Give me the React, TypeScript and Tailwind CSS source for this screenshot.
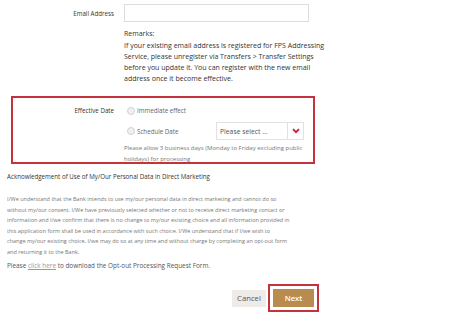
import React from 'react';

const Radio = () => (
    <span className="inline-block w-[8px] h-[8px] rounded-full border border-[#d2d2d2] bg-[#f0f0f0]" />
);

const App = () => {
    return (
        <div className="w-[474px] h-[314px] bg-white overflow-hidden font-['Open_Sans',sans-serif] text-[7px] leading-[11px] text-[#444] whitespace-nowrap">
            {/* Email */}
            <div className="flex items-center pt-[4px]">
                <div className="w-[114px] text-right text-[#333] text-[6.2px]">Email Address</div>
                <div className="ml-[10px] w-[185px] h-[18px] border border-[#ddd] bg-white" />
            </div>

            {/* Remarks */}
            <div className="ml-[124px] mt-[6px] text-[#333]">
                <div>Remarks:</div>
                <div className="mt-[1px]">
                    If your existing email address is registered for FPS Addressing<br />
                    Service, please unregister via Transfers &gt; Transfer Settings<br />
                    before you update it. You can register with the new email<br />
                    address once it become effective.
                </div>
            </div>

            {/* Effective date box */}
            <div className="ml-[11px] mt-[12px] w-[304px] h-[68px] border-2 border-[#c4323c] pt-[7px] text-[6.2px]">
                <div className="flex items-center h-[11px]">
                    <div className="w-[101px] text-right text-[#333]">Effective Date</div>
                    <div className="ml-[13px] flex items-center gap-[2px] text-[#666]">
                        <Radio />
                        <span>Immediate effect</span>
                    </div>
                </div>
                <div className="flex items-center mt-[6px] h-[18px]">
                    <div className="w-[114px]" />
                    <div className="w-[89px] flex items-center gap-[2px] text-[#666]">
                        <Radio />
                        <span>Schedule Date</span>
                    </div>
                    <div className="flex h-[18px] w-[88px] border border-[#e2e2e2]">
                        <div className="flex-1 flex items-center pl-[3px] text-[#555] text-[6.8px]">Please select ...</div>
                        <div className="w-[16px] border-l border-[#e2e2e2] flex items-center justify-center">
                            <svg width="8" height="6" viewBox="0 0 8 6">
                                <path d="M1 1.2 L4 4.2 L7 1.2" fill="none" stroke="#c4202e" strokeWidth="1.8" />
                            </svg>
                        </div>
                    </div>
                </div>
                <div className="ml-[111px] mt-[3px] text-[#777] text-[6px]">
                    Please allow 3 business days (Monday to Friday excluding public<br />
                    holidays) for processing
                </div>
            </div>

            {/* Acknowledgement */}
            <div className="ml-[7px] mt-[7px] text-[#333] text-[6.2px]">
                Acknowledgement of Use of My/Our Personal Data in Direct Marketing
            </div>
            <div className="ml-[7px] mt-[12px] text-[#777] text-[5.5px] leading-[10.5px]">
                I/We understand that the Bank intends to use my/our personal data in direct marketing and cannot do so<br />
                without my/our consent. I/We have previously selected whether or not to receive direct marketing contact or<br />
                information and I/we confirm that there is no change to my/our existing choice and all information provided in<br />
                this application form shall be used in accordance with such choice. I/We understand that if I/we wish to<br />
                change my/our existing choice, I/we may do so at any time and without charge by completing an opt-out form<br />
                and returning it to the Bank.
            </div>
            <div className="ml-[7px] mt-[3px] text-[#555] text-[6.4px]">
                Please <a className="underline text-[#999]">click here</a> to download the Opt-out Processing Request Form.
            </div>

            {/* Buttons */}
            <div className="flex items-center ml-[232px] mt-[13px] gap-[2px]">
                <button className="w-[34px] h-[17px] bg-[#eeebe8] text-[#555] text-[7.7px]">Cancel</button>
                <div className="border-2 border-[#c4323c] p-[3px]">
                    <button className="block w-[41px] h-[18px] bg-[#b98b4f] text-white text-[7.7px] font-semibold">Next</button>
                </div>
            </div>
        </div>
    );
};

export default App;
